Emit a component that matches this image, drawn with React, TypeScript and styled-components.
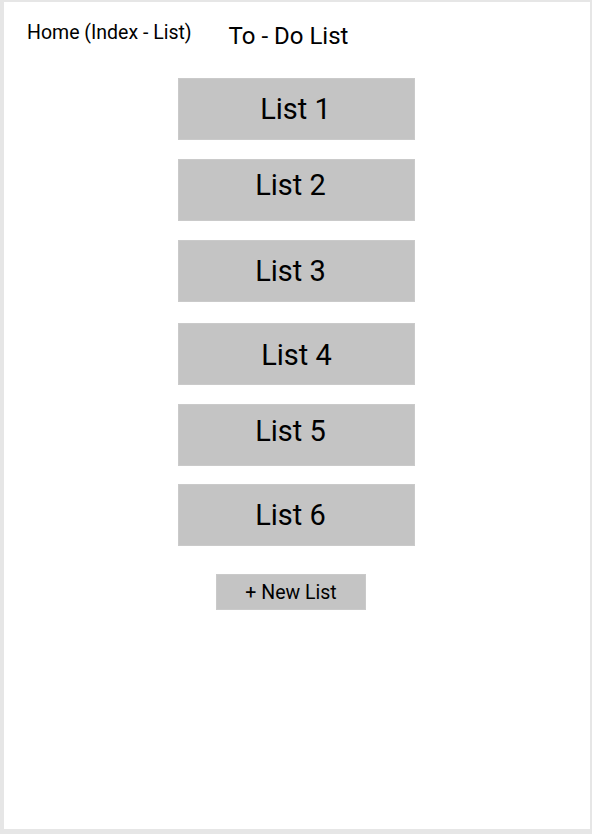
import styled, { createGlobalStyle } from "styled-components";

const GlobalStyle = createGlobalStyle`
  html, body {
    margin: 0;
    padding: 0;
    background: #e6e6e6;
  }
  body {
    font-family: Roboto, "Liberation Sans", sans-serif;
    color: #000;
  }
`;

const Frame = styled.div`
  box-sizing: border-box;
  margin: 2px 2px 5px 4px;
  height: 827px;
  background: #ffffff;
  display: flex;
  flex-direction: column;
`;

const Header = styled.header`
  display: flex;
  align-items: flex-start;
  gap: 37px;
  padding: 19px 0 0 23px;
  height: 76px;
  box-sizing: border-box;
`;

const HomeLabel = styled.span`
  font-size: 19.5px;
  line-height: normal;
`;

const Title = styled.h1`
  margin: 1px 0 0;
  font-size: 24px;
  font-weight: 400;
  line-height: normal;
`;

const ListColumn = styled.div`
  display: flex;
  flex-direction: column;
  align-items: center;
  padding-right: 1px;
`;

const ListCard = styled.div<{ $gap: number; $dx: number; $dy: number }>`
  box-sizing: border-box;
  width: 237px;
  height: 62px;
  margin-top: ${(p) => p.$gap}px;
  background: #c4c4c4;
  border: 1px solid #cacaca;
  display: flex;
  align-items: center;
  justify-content: center;
  font-size: 29px;
  & > span {
    position: relative;
    left: ${(p) => p.$dx}px;
    top: ${(p) => p.$dy}px;
  }
`;

const NewListButton = styled.button`
  box-sizing: border-box;
  width: 150px;
  height: 36px;
  margin: 28px 0 0 -12px;
  align-self: center;
  background: #c4c4c4;
  border: 1px solid #cacaca;
  font-family: Roboto, "Liberation Sans", sans-serif;
  font-size: 19.5px;
  color: #000;
  padding: 0;
  cursor: pointer;
`;

const lists = [
  { name: "List 1", gap: 0, dx: -1, dy: 0 },
  { name: "List 2", gap: 19, dx: -6, dy: -5 },
  { name: "List 3", gap: 19, dx: -6, dy: 0 },
  { name: "List 4", gap: 21, dx: 0, dy: 1 },
  { name: "List 5", gap: 19, dx: -6, dy: -4 },
  { name: "List 6", gap: 18, dx: -6, dy: 0 },
];

export default function App() {
  return (
    <>
      <GlobalStyle />
      <Frame>
        <Header>
          <HomeLabel>Home (Index - List)</HomeLabel>
          <Title>To - Do List</Title>
        </Header>
        <ListColumn>
          {lists.map((l) => (
            <ListCard key={l.name} $gap={l.gap} $dx={l.dx} $dy={l.dy}>
              <span>{l.name}</span>
            </ListCard>
          ))}
        </ListColumn>
        <NewListButton type="button">+ New List</NewListButton>
      </Frame>
    </>
  );
}
